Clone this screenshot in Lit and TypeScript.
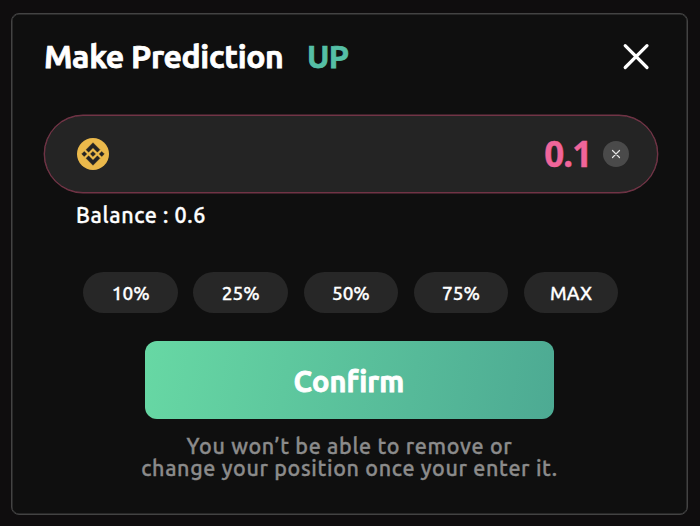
import { LitElement, html, css } from "lit";
import { customElement, property, state } from "lit/decorators.js";

@customElement("percent-chip")
class PercentChip extends LitElement {
  @property() label = "";

  static styles = css`
    :host { display: block; }
    .chip {
      display: flex;
      align-items: center;
      justify-content: center;
      width: 94.6px;
      height: 41px;
      padding: 0;
      border: 0;
      border-radius: 21px;
      box-sizing: border-box;
      background: #272727;
      color: #fff;
      font: 500 19px "Ubuntu", "Noto Sans", sans-serif;
      -webkit-text-stroke: 0.3px #fff;
    }
  `;

  render() {
    return html`<button class="chip">${this.label}</button>`;
  }
}

@customElement("app-root")
class AppRoot extends LitElement {
  @state() amount = "0.1";

  static styles = css`
    :host {
      display: block;
      box-sizing: border-box;
      width: 700px;
      height: 526px;
      padding: 13px 12px 11px 11px;
      background: #0f0d0e;
      color: #fff;
      font-family: "Ubuntu", "Noto Sans", sans-serif;
    }
    button { font-family: inherit; }
    .card {
      box-sizing: border-box;
      height: 502px;
      border: 1px solid #434343;
      border-radius: 8px;
      background: #0f0f0f;
      box-shadow: inset 0 0 0 0.5px #434343;
      padding: 20px 29px 0 32px;
      display: flex;
      flex-direction: column;
    }
    .header {
      display: flex;
      align-items: center;
      height: 44px;
      font-size: 32px;
      font-weight: 700;
      line-height: 44px;
      white-space: nowrap;
      -webkit-text-stroke: 0.75px currentColor;
    }
    .title { width: 263px; letter-spacing: -0.36px; }
    .direction { color: #55bfa5; letter-spacing: -0.8px; }
    .close {
      margin-left: auto;
      margin-right: 7px;
      padding: 0;
      border: 0;
      background: none;
      width: 30px;
      height: 30px;
    }
    svg { display: block; }
    .field {
      box-sizing: border-box;
      height: 78px;
      margin-top: 37px;
      border: 1px solid #713446;
      border-radius: 39px;
      background: #242424;
      box-shadow: 0 0 0 0.4px #713446;
      display: flex;
      align-items: center;
      padding: 0 27.6px 0 32px;
    }
    .amount {
      margin-left: auto;
      margin-right: 12px;
      color: #f0659a;
      font-family: "Noto Sans", "Open Sans", sans-serif;
      font-size: 35px;
      font-weight: 700;
      line-height: 44px;
      letter-spacing: -0.9px;
      -webkit-text-stroke: 0.4px #f0659a;
    }
    .clear {
      width: 26px;
      height: 26px;
      border: 0;
      border-radius: 50%;
      padding: 0;
      background: #4a4a4a;
      display: grid;
      place-items: center;
    }
    .balance {
      margin: 8px 0 0 32px;
      font-size: 21.5px;
      font-weight: 500;
      line-height: 28px;
      letter-spacing: 0.6px;
      -webkit-text-stroke: 0.35px #fff;
    }
    .chips {
      display: flex;
      gap: 15.5px;
      margin: 43px 0 0 39.4px;
    }
    .confirm {
      align-self: center;
      width: 409px;
      height: 78px;
      margin: 28px 4px 0 0;
      padding: 2px 0 0 0;
      border: 0;
      border-radius: 12px;
      background: linear-gradient(100deg, #67d8a4, #4daa93);
      color: #fff;
      font-size: 29px;
      font-weight: 700;
      letter-spacing: 0.1px;
      -webkit-text-stroke: 0.8px #fff;
    }
    .note {
      margin: 16px 3px 0 0;
      text-align: center;
      color: #8b8b8b;
      font-size: 21.5px;
      font-weight: 500;
      line-height: 22px;
      letter-spacing: 0.65px;
      -webkit-text-stroke: 0.35px #8b8b8b;
    }
    .note span { display: block; }
  `;

  render() {
    return html`
      <div class="card">
        <div class="header">
          <span class="title">Make Prediction</span>
          <span class="direction">UP</span>
          <button class="close" aria-label="Close">
            <svg width="30" height="30" viewBox="0 0 30 30" fill="none" stroke="#fff" stroke-width="3.2" stroke-linecap="round">
              <path d="M4.2 4.7 26 26.5M26 4.7 4.2 26.5" />
            </svg>
          </button>
        </div>
        <div class="field">
          <svg width="32" height="32" viewBox="0 0 32 32">
            <circle cx="16" cy="16" r="16" fill="#ebb94b" />
            <path fill="#242424" stroke="#242424" stroke-width="0.35" transform="translate(16 16) scale(1.13) translate(-16 -16)" d="M12.116 14.404 16 10.52l3.886 3.886 2.26-2.26L16 6l-6.144 6.144zM6 16l2.26-2.26L10.52 16l-2.26 2.26zm6.116 1.596L16 21.48l3.886-3.886 2.26 2.259L16 26l-6.144-6.144-.003-.003zM21.48 16l2.26-2.26L26 16l-2.26 2.26zm-3.188-.002h.002V16L16 18.294l-2.291-2.29-.004-.004.004-.003.401-.402.195-.195L16 13.706z" />
          </svg>
          <span class="amount">${this.amount}</span>
          <button class="clear" aria-label="Clear" @click=${() => (this.amount = "")}>
            <svg width="10" height="10" viewBox="0 0 10 10" fill="none" stroke="#e4e4e4" stroke-width="1.2" stroke-linecap="round">
              <path d="M1.5 1.5 8.5 8.5M8.5 1.5 1.5 8.5" />
            </svg>
          </button>
        </div>
        <div class="balance">Balance : 0.6</div>
        <div class="chips">
          ${["10%", "25%", "50%", "75%", "MAX"].map((l) => html`<percent-chip .label=${l}></percent-chip>`)}
        </div>
        <button class="confirm">Confirm</button>
        <div class="note">
          <span>You won’t be able to remove or</span>
          <span>change your position once your enter it.</span>
        </div>
      </div>
    `;
  }
}
